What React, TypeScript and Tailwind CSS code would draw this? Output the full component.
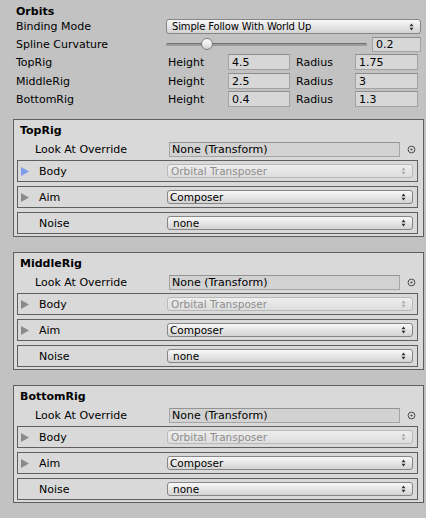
import React from 'react';

function Arrows({ dim }: { dim?: boolean }) {
  const c = dim ? '#a9a9a9' : '#2e2e2e';
  return (
    <svg width="5" height="8" viewBox="0 0 5 8" className="shrink-0">
      <path d="M2.5 0.5 L4.5 3.2 H0.5 Z" fill={c} />
      <path d="M2.5 7.5 L4.5 4.8 H0.5 Z" fill={c} />
    </svg>
  );
}

function Dropdown({
  label,
  disabled,
  className = '',
  textClass = '',
}: {
  label: string;
  disabled?: boolean;
  className?: string;
  textClass?: string;
}) {
  return (
    <div
      className={`flex items-center justify-between rounded-[3px] border bg-linear-to-b pr-[6px] ${
        disabled
          ? 'border-[#b9b9b9] from-[#eeeeee] to-[#dddddd] text-[#8e8e8e]'
          : 'border-[#868686] from-[#f8f8f8] to-[#d3d3d3] text-black'
      } ${className}`}
    >
      <span className={`leading-none ${textClass}`}>{label}</span>
      <Arrows dim={disabled} />
    </div>
  );
}

function NumField({ value, className = '' }: { value: string; className?: string }) {
  return (
    <div
      className={`flex items-center border border-[#a2a2a2] border-t-[#8d8d8d] bg-[#d7d7d7] pl-[3px] leading-none ${className}`}
    >
      {value}
    </div>
  );
}

function Target() {
  return (
    <svg width="9" height="9" viewBox="0 0 9 9">
      <circle cx="4.5" cy="4.5" r="3.4" fill="none" stroke="#4a4a4a" strokeWidth="1" />
      <circle cx="4.5" cy="4.5" r="1.1" fill="#4a4a4a" />
    </svg>
  );
}

function Foldout({ color }: { color: string }) {
  return (
    <svg width="8" height="9" viewBox="0 0 8 9">
      <path d="M0 0 L8 4.5 L0 9 Z" fill={color} />
    </svg>
  );
}

function SubBox({
  label,
  value,
  fold,
  disabled,
  textClass,
}: {
  label: string;
  value: string;
  fold?: string;
  disabled?: boolean;
  textClass: string;
}) {
  return (
    <div className="ml-[3px] flex h-[22px] w-[401px] items-center border border-[#5f5f5f]">
      <div className="flex w-[21px] items-center pl-[3px]">{fold && <Foldout color={fold} />}</div>
      <span className="w-[128px]">{label}</span>
      <Dropdown label={value} disabled={disabled} className="h-[14px] w-[246px]" textClass={textClass} />
    </div>
  );
}

function RigPanel({ title, foldColor }: { title: string; foldColor: string }) {
  return (
    <div className="ml-[13px] h-[118px] w-[411px] border border-[#5f5f5f] bg-[#d9d9d9]">
      <div className="flex h-[20px] items-center pl-[6px] font-bold">{title}</div>
      <div className="mt-[1px] flex h-[16px] items-center">
        <span className="w-[155px] pl-[21px]">Look At Override</span>
        <div className="flex h-[15px] w-[231px] items-center border border-[#a5a5a5] border-t-[#939393] bg-[#d2d2d2] pl-[2px] leading-none">
          None (Transform)
        </div>
        <div className="flex w-[22px] justify-center">
          <Target />
        </div>
      </div>
      <div className="mt-[3px]">
        <SubBox
          label="Body"
          value="Orbital Transposer"
          fold={foldColor}
          disabled
          textClass="pl-[3px] text-[10.5px]"
        />
      </div>
      <div className="mt-[4px]">
        <SubBox label="Aim" value="Composer" fold="#8a8a8a" textClass="pl-[2px] text-[10.5px]" />
      </div>
      <div className="mt-[4px]">
        <SubBox label="Noise" value="none" textClass="pl-[5px] text-[10.5px]" />
      </div>
    </div>
  );
}

const rigs = [
  { name: 'TopRig', height: '4.5', radius: '1.75', mt: 'mt-[2px]' },
  { name: 'MiddleRig', height: '2.5', radius: '3', mt: 'mt-[3px]' },
  { name: 'BottomRig', height: '0.4', radius: '1.3', mt: 'mt-[2px]' },
];

export default function App() {
  return (
    <div className="h-[518px] w-[426px] overflow-hidden bg-[#c2c2c2] pt-[3px] font-['DejaVu_Sans',sans-serif] text-[11px] leading-[13px] text-black">
      <div className="flex h-[16px] items-center pl-[16px] font-bold">Orbits</div>

      <div className="flex h-[15px] items-center">
        <span className="w-[166px] pl-[16px]">Binding Mode</span>
        <Dropdown
          label="Simple Follow With World Up"
          className="h-[15px] w-[255px]"
          textClass="pl-[5px] text-[10px] tracking-[-0.15px]"
        />
      </div>

      <div className="mt-[3px] flex h-[15px] items-center">
        <span className="w-[166px] pl-[16px]">Spline Curvature</span>
        {/* slider drawing */}
        <div className="relative h-full w-[201px]">
          <div className="absolute left-0 right-0 top-[6px] h-[3px] rounded-full border-t border-[#6f6f6f] bg-[#9b9b9b]" />
          <div className="absolute left-[35px] top-[1px] h-[12px] w-[12px] rounded-full border border-[#7d7d7d] bg-linear-to-b from-white to-[#d6d6d6]" />
        </div>
        <NumField value="0.2" className="ml-[5px] h-[15px] w-[49px]" />
      </div>

      {rigs.map((r) => (
        <div key={r.name} className={`${r.mt} flex h-[16px] items-center`}>
          <span className="w-[166px] pl-[16px]">{r.name}</span>
          <span className="w-[62px] pl-[2px]">Height</span>
          <NumField value={r.height} className="h-[16px] w-[62px]" />
          <span className="w-[65px] pl-[6px]">Radius</span>
          <NumField value={r.radius} className="h-[16px] w-[63px]" />
        </div>
      ))}

      <div className="mt-[12px]">
        <RigPanel title="TopRig" foldColor="#7f9ceb" />
      </div>
      <div className="mt-[15px]">
        <RigPanel title="MiddleRig" foldColor="#8a8a8a" />
      </div>
      <div className="mt-[15px]">
        <RigPanel title="BottomRig" foldColor="#8a8a8a" />
      </div>
    </div>
  );
}
